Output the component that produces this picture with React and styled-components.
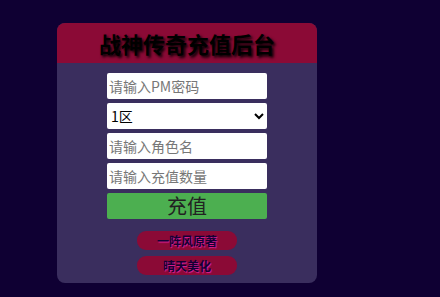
import styled, { createGlobalStyle } from "styled-components";

const Global = createGlobalStyle`
  html, body {
    margin: 0;
    padding: 0;
    background: #0f0033;
    font-family: "Liberation Sans", "Noto Sans CJK SC", sans-serif;
  }
`;

const Page = styled.div`
  width: 440px;
  height: 297px;
  display: flex;
  padding: 23px 0 0 57px;
  box-sizing: border-box;
`;

const Card = styled.div`
  width: 260px;
  height: 260px;
  background: #3a2e5e;
  border-radius: 8px;
  overflow: hidden;
  display: flex;
  flex-direction: column;
  align-items: center;
`;

const Header = styled.h1`
  width: 100%;
  height: 40px;
  margin: 0;
  background: #8b0a36;
  color: #000;
  font-size: 22px;
  font-weight: bold;
  line-height: 40px;
  text-align: center;
  text-shadow: 2px 2px 3px #000;
  font-family: "Noto Sans CJK SC", sans-serif;
`;

const Form = styled.form`
  width: 160px;
  display: flex;
  flex-direction: column;
  gap: 4px;
  margin-top: 10px;
`;

const Input = styled.input`
  height: 26px;
  box-sizing: border-box;
  border: none;
  border-radius: 2px;
  padding: 0 2px;
  font-size: 14px;
  font-family: "Noto Sans CJK SC", sans-serif;
  color: #000;
  background: #fff;
  &::placeholder {
    color: #777;
  }
`;

const Select = styled.select`
  height: 26px;
  box-sizing: border-box;
  border: none;
  border-radius: 2px;
  padding: 0;
  font-size: 14px;
  font-family: "Noto Sans CJK SC", sans-serif;
  background: #fff;
  color: #000;
`;

const Submit = styled.button`
  height: 26px;
  border: none;
  border-radius: 2px;
  background: #4caf50;
  color: #222;
  font-size: 20px;
  line-height: 26px;
  padding: 0;
  font-family: "Noto Sans CJK SC", sans-serif;
`;

const Credits = styled.div`
  display: flex;
  flex-direction: column;
  gap: 6px;
  margin-top: 12px;
`;

const Badge = styled.div`
  width: 100px;
  height: 19px;
  border-radius: 9px;
  background: #8b0a36;
  color: #140033;
  font-size: 12px;
  font-weight: bold;
  line-height: 19px;
  text-align: center;
  text-shadow: 1px 1px 1px #e0209a;
  font-family: "Noto Sans CJK SC", sans-serif;
`;

export default function App() {
  return (
    <>
      <Global />
      <Page>
        <Card>
          <Header>战神传奇充值后台</Header>
          <Form onSubmit={(e) => e.preventDefault()}>
            <Input type="password" placeholder="请输入PM密码" />
            <Select defaultValue="1">
              <option value="1">1区</option>
              <option value="2">2区</option>
            </Select>
            <Input placeholder="请输入角色名" />
            <Input placeholder="请输入充值数量" />
            <Submit type="submit">充值</Submit>
          </Form>
          <Credits>
            <Badge>一阵风原著</Badge>
            <Badge>晴天美化</Badge>
          </Credits>
        </Card>
      </Page>
    </>
  );
}
